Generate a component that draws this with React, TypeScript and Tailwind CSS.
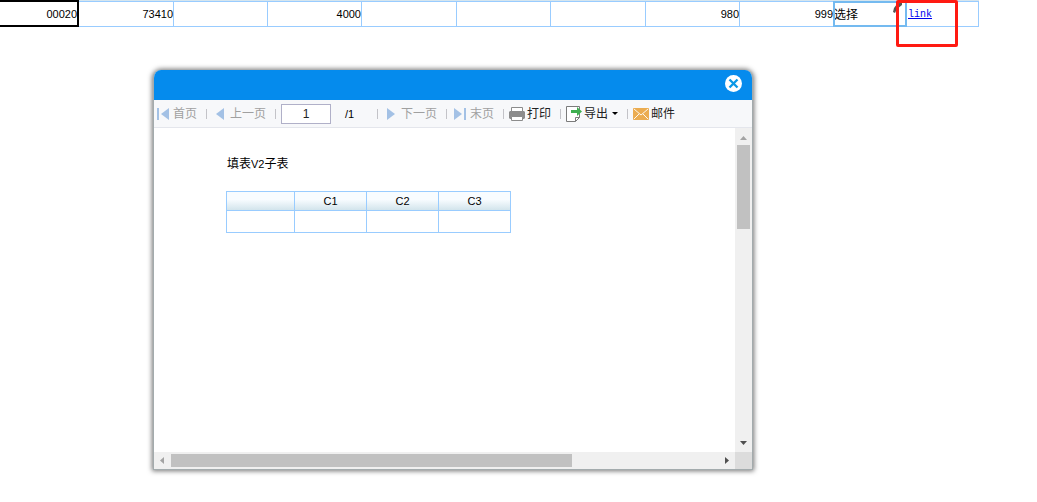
import React, { useState } from "react";

const cells = ["73410", "", "4000", "", "", "", "980", "999"];

const Separator = () => <span className="ml-[9px] mr-[5px] h-2.5 w-px shrink-0 bg-[#c3c3c8]" />;

const PrevIcon = ({ bar = false }: { bar?: boolean }) => (
    <svg width={bar ? 12 : 8} height="12" viewBox={bar ? "0 0 12 12" : "4 0 8 12"} fill="#a3c1e5">
        {bar && <rect x="0" y="0" width="2" height="12" />}
        <path d="M12 0v12L4 6z" />
    </svg>
);

const NextIcon = ({ bar = false }: { bar?: boolean }) => (
    <svg width={bar ? 12 : 8} height="12" viewBox={bar ? "0 0 12 12" : "0 0 8 12"} fill="#a3c1e5">
        <path d="M0 0v12l8-6z" />
        {bar && <rect x="10" y="0" width="2" height="12" />}
    </svg>
);

const PrintIcon = () => (
    <svg width="16" height="14" viewBox="0 0 16 14">
        <path d="M2.5 .5h11v4h-11z" fill="#fff" stroke="#8c8c8c" />
        <path d="M1 4h14l1 1v6l-1 1H1l-1-1V5z" fill="#8c8c8c" />
        <path d="M2.5 9.5h11v4h-11z" fill="#fff" stroke="#8c8c8c" />
    </svg>
);

const ExportIcon = () => (
    <svg width="16" height="16" viewBox="0 0 16 16">
        <path d="M.5 .5h13v11l-4 4h-9z" fill="#fff" stroke="#7b7b7b" />
        <path d="M9.500 15.500v-4h4" fill="none" stroke="#7b7b7b" />
        <path d="M5 4h6V1l5 4.500-5 4.500V7H5z" fill="#3faf50" />
    </svg>
);

const MailIcon = () => (
    <svg width="16" height="12" viewBox="0 0 16 12">
        <rect width="16" height="12" rx="1" fill="#ebac50" />
        <path d="M1 1l7 6 7-6M1 11l5-5M15 11l-5-5" fill="none" stroke="#fff" strokeWidth=".9" />
    </svg>
);

const DataRow = () => (
    <table className="w-[979px] table-fixed border-separate border-spacing-0 border-t border-[#99ccff] text-[11px] leading-3">
        <colgroup>
            <col className="w-[79px]" />
            <col className="w-[95px]" />
            <col className="w-[94px]" />
            <col className="w-[94px]" />
            <col className="w-[95px]" />
            <col className="w-[94px]" />
            <col className="w-[95px]" />
            <col className="w-[94px]" />
            <col className="w-[94px]" />
            <col className="w-[73px]" />
            <col className="w-[72px]" />
        </colgroup>
        <tbody>
            <tr className="h-[25px]">
                <td className="relative border-b border-r border-[#99ccff] p-0 pr-px text-right">
                    00020
                    <span className="absolute -right-px -top-0.5 -bottom-px left-0 border-2 border-l-0 border-black" />
                </td>
                {cells.map((value, i) => (
                    <td key={i} className="border-b border-r border-[#99ccff] p-0 text-right">
                        {value}
                    </td>
                ))}
                <td className="relative border-b border-r border-[#99ccff] p-0 pt-0.5 text-xs leading-3">
                    选择
                    <span className="absolute -inset-px border-2 border-[#74baf0]" />
                    <svg className="absolute right-1 top-0" width="9" height="11" viewBox="0 0 9 11">
                        <path d="M9 0L4 2 1 6 0 10l2 1 2-4 5-4z" fill="#555" />
                    </svg>
                </td>
                <td className="border-b border-r border-[#99ccff] p-0 pl-px pt-0.5 font-['Liberation_Mono',monospace] text-[10px]">
                    <a href="#" className="text-[#0000ee] underline">
                        link
                    </a>
                </td>
            </tr>
        </tbody>
    </table>
);

const Toolbar = () => {
    const [page, setPage] = useState("1");

    return (
        <div className="flex h-7 items-center whitespace-nowrap border-b border-[#e4e6ec] bg-[#f7f8fa] pl-[3px] text-xs leading-4 text-[#222]">
            <button disabled className="flex items-center gap-1 text-[#a0a0a0]">
                <PrevIcon bar />
                首页
            </button>
            <Separator />
            <button disabled className="flex items-center gap-1.5 pl-1 text-[#a0a0a0]">
                <PrevIcon />
                上一页
            </button>
            <Separator />
            <input
                aria-label="页码"
                value={page}
                onChange={(e) => setPage(e.target.value)}
                className="h-5 w-[50px] border border-[#b0b0c8] bg-white text-center text-xs text-[#222]"
            />
            <span className="ml-3.5 mr-[11px] w-3 text-[11px] text-black">/1</span>
            <Separator />
            <button disabled className="flex items-center gap-1.5 pl-1 text-[#a0a0a0]">
                <NextIcon />
                下一页
            </button>
            <Separator />
            <button disabled className="flex items-center gap-1 pl-0.5 text-[#a0a0a0]">
                <NextIcon bar />
                末页
            </button>
            <Separator />
            <button className="flex items-center gap-0.5">
                <PrintIcon />
                打印
            </button>
            <Separator />
            <button className="flex items-center gap-0.5">
                <ExportIcon />
                导出
                <svg className="ml-0.5" width="6" height="3" viewBox="0 0 6 3">
                    <path d="M0 0h6L3 3z" />
                </svg>
            </button>
            <Separator />
            <button className="flex items-center gap-0.5">
                <MailIcon />
                邮件
            </button>
        </div>
    );
};

const SubTable = () => (
    <table className="mt-[19px] w-[285px] table-fixed border-collapse text-[11px] leading-3">
        <thead>
            <tr className="h-[19px] bg-linear-to-b from-[#f8fcff] from-40% to-[#cfe2ea]">
                <th aria-label="行" className="w-[68px] border border-[#99ccff] p-0" />
                {["C1", "C2", "C3"].map((name) => (
                    <th key={name} className="w-[72px] border border-[#99ccff] p-0 font-normal">
                        {name}
                    </th>
                ))}
            </tr>
        </thead>
        <tbody>
            <tr className="h-[22px]">
                <td className="border border-[#99ccff]" />
                <td className="border border-[#99ccff]" />
                <td className="border border-[#99ccff]" />
                <td className="border border-[#99ccff]" />
            </tr>
        </tbody>
    </table>
);

const Dialog = () => (
    <div
        role="dialog"
        aria-label="填表V2子表"
        className="w-[600px] overflow-hidden rounded-t-lg border-x border-b border-[#a3abad] bg-white shadow-[0_0_5px_1px_rgba(0,0,0,0.55)]"
    >
        <div className="flex h-[30px] items-center justify-end bg-[#058bed] pb-1 pr-2.5">
            <button aria-label="关闭">
                <svg width="17" height="17" viewBox="0 0 17 17">
                    <circle cx="8.500" cy="8.500" r="8.500" fill="#fff" />
                    <path d="M4.500 4.500l8 8M12.500 4.500l-8 8" stroke="#0b98e6" strokeWidth="2.300" />
                </svg>
            </button>
        </div>
        <Toolbar />
        <div className="flex">
            <div className="h-[324px] grow pl-[72px] pt-7">
                <p className="pl-px text-xs leading-4">
                    填表<span className="text-[11px]">V2</span>子表
                </p>
                <SubTable />
            </div>
            {/* vertical scrollbar */}
            <div className="flex w-[17px] flex-col items-center bg-[#f0f0f0] pb-[7px] pt-2">
                <svg width="7" height="4" viewBox="0 0 7 4" fill="#a3a3a3">
                    <path d="M0 4h7L3.500 0z" />
                </svg>
                <div className="mt-[5px] h-[84px] w-[13px] bg-[#c1c1c1]" />
                <svg className="mt-auto" width="7" height="4" viewBox="0 0 7 4" fill="#505050">
                    <path d="M0 0h7L3.500 4z" />
                </svg>
            </div>
        </div>
        {/* horizontal scrollbar */}
        <div className="flex h-[17px]">
            <div className="flex grow items-center bg-[#f0f0f0] px-1.5">
                <svg width="4" height="7" viewBox="0 0 4 7" fill="#a3a3a3">
                    <path d="M4 0v7L0 3.500z" />
                </svg>
                <div className="ml-[7px] h-[13px] w-[401px] bg-[#c1c1c1]" />
                <svg className="ml-auto" width="4" height="7" viewBox="0 0 4 7" fill="#505050">
                    <path d="M0 0v7l4-3.500z" />
                </svg>
            </div>
            <div className="w-[17px] bg-[#dcdcdc]" />
        </div>
    </div>
);

export default function App() {
    return (
        <div className="relative min-h-screen overflow-hidden bg-white font-['Liberation_Sans','Noto_Sans_CJK_SC',sans-serif] text-black">
            <div className="h-px w-[979px] bg-[#d5e5ee]" />
            <DataRow />
            {/* marker around the link cell */}
            <div className="absolute left-[896px] top-0 h-[47px] w-[62px] rounded-xs border-[3px] border-[#ff1a12]" />
            <div className="pl-[153px] pt-[43px]">
                <Dialog />
            </div>
        </div>
    );
}
